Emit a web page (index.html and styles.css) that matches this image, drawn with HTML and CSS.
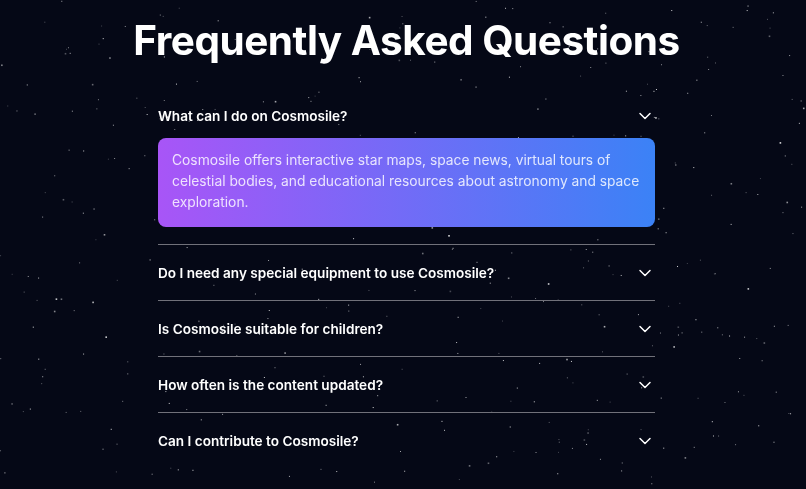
FILE: index.html
```html
<!DOCTYPE html>
<html lang="en">
<head>
<meta charset="utf-8">
<title>FAQ</title>
<link rel="stylesheet" href="styles.css">
</head>
<body>
<canvas id="stars" class="stars"></canvas>
<main class="page">
  <h1 class="title">Frequently Asked Questions</h1>
  <section class="faq">
    <div class="item item--open">
      <div class="question">
        <span>What can I do on Cosmosile?</span>
        <svg class="chev" viewBox="0 0 24 24" width="20" height="20"><path d="m6 9 6 6 6-6"/></svg>
      </div>
      <div class="answer">Cosmosile offers interactive star maps, space news, virtual tours of celestial bodies, and educational resources about astronomy and space exploration.</div>
    </div>
    <div class="item">
      <div class="question">
        <span>Do I need any special equipment to use Cosmosile?</span>
        <svg class="chev" viewBox="0 0 24 24" width="20" height="20"><path d="m6 9 6 6 6-6"/></svg>
      </div>
    </div>
    <div class="item">
      <div class="question">
        <span>Is Cosmosile suitable for children?</span>
        <svg class="chev" viewBox="0 0 24 24" width="20" height="20"><path d="m6 9 6 6 6-6"/></svg>
      </div>
    </div>
    <div class="item">
      <div class="question">
        <span>How often is the content updated?</span>
        <svg class="chev" viewBox="0 0 24 24" width="20" height="20"><path d="m6 9 6 6 6-6"/></svg>
      </div>
    </div>
    <div class="item item--last">
      <div class="question">
        <span>Can I contribute to Cosmosile?</span>
        <svg class="chev" viewBox="0 0 24 24" width="20" height="20"><path d="m6 9 6 6 6-6"/></svg>
      </div>
    </div>
  </section>
</main>
<script src="script.js"></script>
</body>
</html>
```
FILE: styles.css
```css
html, body {
  margin: 0;
  height: 100%;
  background: #050816;
  overflow: hidden;
}
body {
  font-family: Inter, "Noto Sans", sans-serif;
  color: #fff;
}
.stars {
  position: fixed;
  inset: 0;
  width: 100%;
  height: 100%;
  z-index: 0;
}
.page {
  position: relative;
  z-index: 1;
  display: flex;
  flex-direction: column;
  align-items: center;
  padding-left: 7px;
}
.title {
  margin: 15px 0 0;
  font-size: 40.5px;
  line-height: 52px;
  font-weight: 700;
  letter-spacing: -0.5px;
}
.faq {
  width: 497px;
  margin-top: 27px;
}
.item {
  border-bottom: 1px solid #71717a;
}
.item--last {
  border-bottom: none;
}
.question {
  height: 55px;
  display: flex;
  align-items: center;
  justify-content: space-between;
  font-size: 13.6px;
  font-weight: 600;
}
.item--open .question {
  height: 44px;
}
.chev {
  fill: none;
  stroke: #fff;
  stroke-width: 1.8;
  stroke-linecap: round;
  stroke-linejoin: round;
}
.answer {
  margin-bottom: 17px;
  padding: 12px 14px 14px;
  border-radius: 8px;
  background: linear-gradient(to right, #a855f7, #3b82f6);
  color: rgba(255, 255, 255, 0.82);
  font-size: 13.8px;
  line-height: 21px;
}
```
FILE: script.js
```js
(function () {
  var c = document.getElementById('stars');
  var w = window.innerWidth, h = window.innerHeight;
  c.width = w; c.height = h;
  var ctx = c.getContext('2d');
  var seed = 7;
  function rnd() { seed = (seed * 16807) % 2147483647; return (seed - 1) / 2147483646; }
  for (var i = 0; i < 420; i++) {
    var x = rnd() * w, y = rnd() * h;
    var a = 0.25 + rnd() * 0.6;
    var s = rnd() < 0.15 ? 1.6 : 1;
    ctx.fillStyle = 'rgba(255,255,255,' + a.toFixed(2) + ')';
    ctx.fillRect(x, y, s, s);
  }
})();
```
